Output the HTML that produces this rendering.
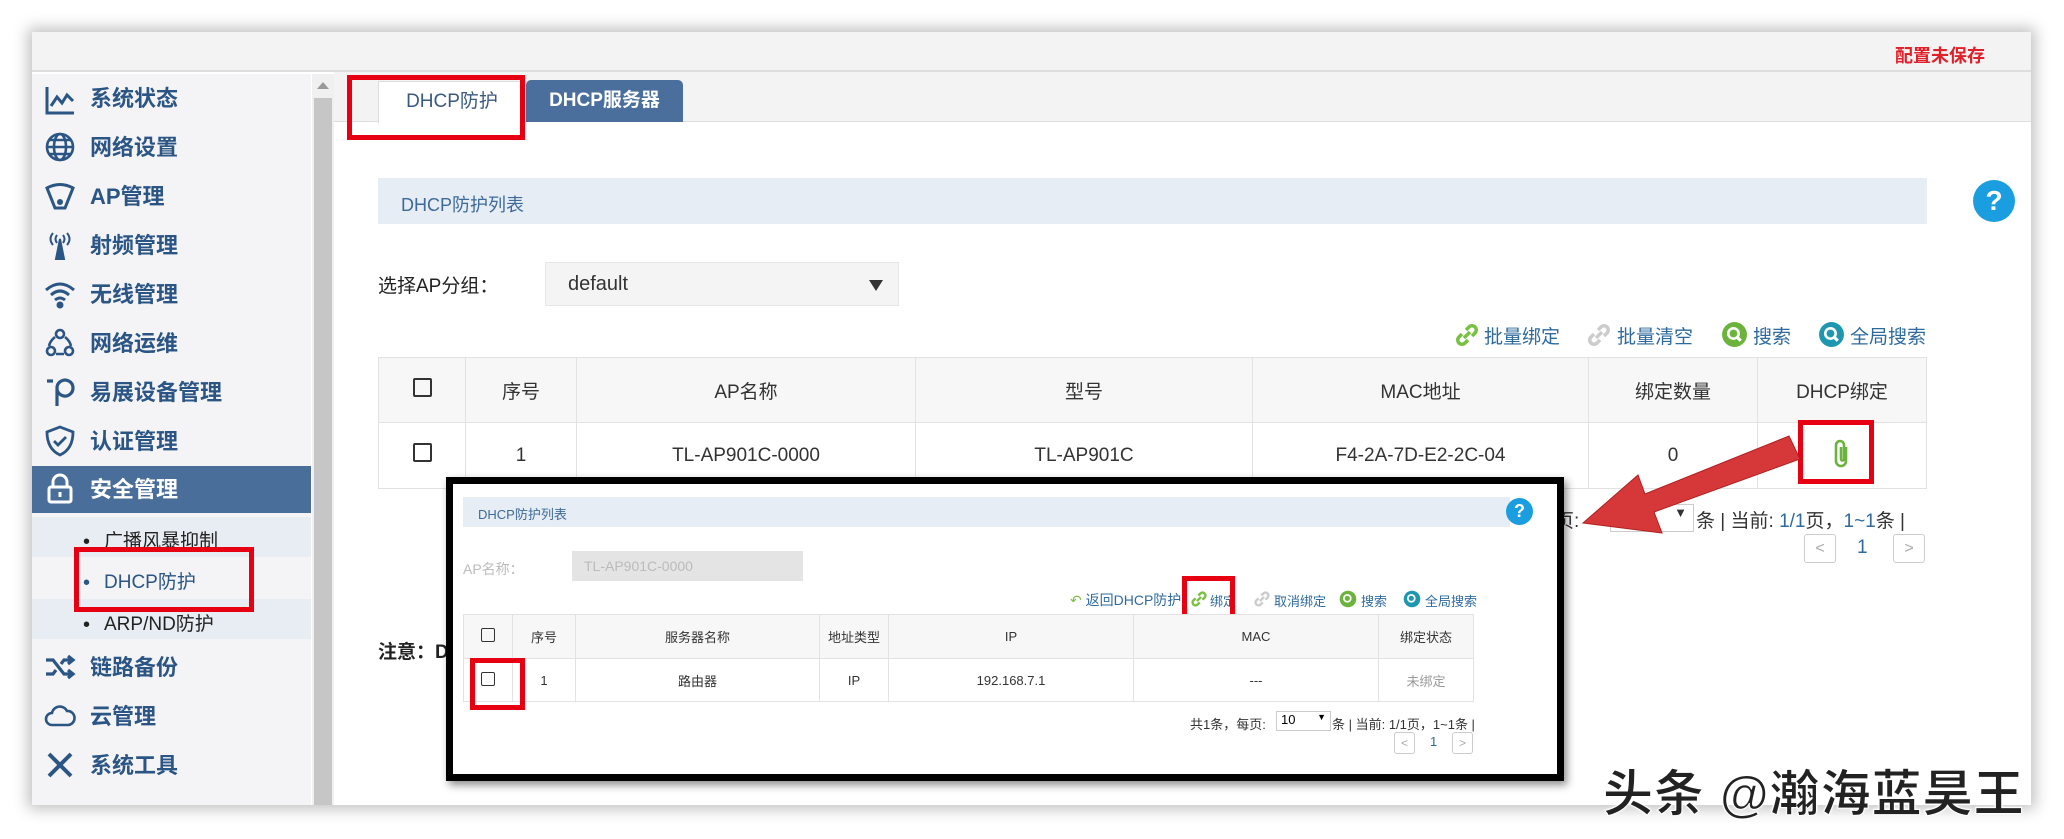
<!DOCTYPE html>
<html><head><meta charset="utf-8"><style>
*{margin:0;padding:0;box-sizing:border-box}
body{width:2064px;height:839px;background:#fff;position:relative;overflow:hidden;font-family:"Liberation Sans","Noto Sans CJK SC",sans-serif}
.a{position:absolute}
.panel{left:32px;top:32px;width:1999px;height:773px;background:#fff;box-shadow:0 0 14px 4px rgba(0,0,0,.25)}
.nav{font-size:22px;font-weight:bold;color:#2b5584;left:90px;line-height:26px}
.ic{left:44px;width:32px;height:32px}
.sub{font-size:19px;color:#222;left:104px}
.rb{border:5px solid #e60012}
table{border-collapse:collapse;position:absolute}
td{border:1px solid #e2e2e2;text-align:center;color:#333}
.cb{display:inline-block;width:19px;height:19px;border:2px solid #333;border-radius:2px}
.lnk{color:#2f6a9e;font-size:19px}
.pg{border:1px solid #ccc;border-radius:3px;background:#fff;color:#aaa;text-align:center}
</style></head><body>
<div class="a panel"></div>
<div class="a" style="left:32px;top:32px;width:1999px;height:40px;background:#f3f3f3;border-bottom:2px solid #ddd"></div>
<div class="a" style="left:1895px;top:42px;font-size:18px;color:#e0202a;font-weight:bold">配置未保存</div>
<div class="a" style="left:32px;top:74px;width:279px;height:731px;background:#f4f4f6"></div>
<div class="a" style="left:312px;top:74px;width:22px;height:731px;background:#f0f0f0"></div>
<div class="a" style="left:314px;top:98px;width:18px;height:707px;background:#c6c6c6"></div>
<div class="a" style="left:317px;top:82px;width:0;height:0;border-left:6px solid transparent;border-right:6px solid transparent;border-bottom:7px solid #999"></div>

<svg class="a ic" style="top:84px" viewBox="0 0 32 32" fill="none" stroke="#2b5584" stroke-width="3"><path d="M3 3V29H30M7 22l6-9 5 6 5-8 6 6"/></svg>
<div class="a nav" style="top:86px">系统状态</div>
<svg class="a ic" style="top:131px" viewBox="0 0 32 32" fill="none" stroke="#2b5584" stroke-width="2.6"><circle cx="16" cy="16" r="13"/><ellipse cx="16" cy="16" rx="6" ry="13"/><path d="M3 16H29M5 9H27M5 23H27"/></svg>
<div class="a nav" style="top:135px">网络设置</div>
<svg class="a ic" style="top:180px" viewBox="0 0 32 32" fill="none" stroke="#2b5584" stroke-width="3"><path d="M3 8Q16 1 29 8L21 28H11Z"/><circle cx="16" cy="22" r="1.5" fill="#2b5584"/></svg>
<div class="a nav" style="top:184px">AP管理</div>
<svg class="a ic" style="top:229px" viewBox="0 0 32 32" fill="none" stroke="#2b5584" stroke-width="2"><path d="M9 4Q4 10 9 16M13 6Q10 10 13 14M23 4Q28 10 23 16M19 6Q22 10 19 14"/><path d="M16 10L12 30H20Z" fill="#2b5584"/></svg>
<div class="a nav" style="top:233px">射频管理</div>
<svg class="a ic" style="top:278px" viewBox="0 0 32 32" fill="none" stroke="#2b5584" stroke-width="3"><path d="M2 12Q16 0 30 12M7 17Q16 9 25 17M11 22Q16 18 21 22"/><circle cx="16" cy="27" r="2" fill="#2b5584"/></svg>
<div class="a nav" style="top:282px">无线管理</div>
<svg class="a ic" style="top:327px" viewBox="0 0 32 32" fill="none" stroke="#2b5584" stroke-width="2.6"><circle cx="16" cy="7" r="4"/><circle cx="7" cy="24" r="4"/><circle cx="25" cy="24" r="4"/><path d="M11 10Q6 14 5 19M21 10Q26 14 27 19M12 27H20"/></svg>
<div class="a nav" style="top:331px">网络运维</div>
<svg class="a ic" style="top:376px" viewBox="0 0 32 32" fill="none" stroke="#2b5584" stroke-width="3.2"><path d="M3 5H9M13 30V12a8 8 0 1 1 0 .1"/></svg>
<div class="a nav" style="top:380px">易展设备管理</div>
<svg class="a ic" style="top:425px" viewBox="0 0 32 32" fill="none" stroke="#2b5584" stroke-width="2.8"><path d="M16 2L29 7Q29 24 16 30Q3 24 3 7Z"/><path d="M10 16l4 4 8-8"/></svg>
<div class="a nav" style="top:429px">认证管理</div>
<div class="a" style="left:32px;top:466px;width:279px;height:47px;background:#4a6e9a"></div>
<svg class="a ic" style="top:473px" viewBox="0 0 32 32" fill="none" stroke="#fff" stroke-width="3"><path d="M9 14V9a7 7 0 0 1 14 0v5"/><rect x="5" y="14" width="22" height="15" rx="2"/><path d="M16 19v5"/></svg>
<div class="a nav" style="top:477px;color:#fff">安全管理</div>
<div class="a" style="left:32px;top:517px;width:279px;height:40px;background:#e8edf3"></div>
<div class="a" style="left:32px;top:599px;width:279px;height:40px;background:#e8edf3"></div>
<div class="a" style="left:83px;top:531px;font-size:20px;color:#222">•</div>
<div class="a sub" style="top:526px">广播风暴抑制</div>
<div class="a" style="left:83px;top:572px;font-size:20px;color:#2b5584">•</div>
<div class="a sub" style="top:567px;color:#2b5584">DHCP防护</div>
<div class="a" style="left:83px;top:614px;font-size:20px;color:#222">•</div>
<div class="a sub" style="top:609px">ARP/ND防护</div>
<div class="a rb" style="left:74px;top:547px;width:180px;height:65px"></div>
<svg class="a ic" style="top:651px" viewBox="0 0 32 32" fill="none" stroke="#2b5584" stroke-width="3.2"><path d="M2 9H9L20 23H28M2 23H9L12 19M17 13L20 9H28M24 5l5 4-5 4M24 19l5 4-5 4"/></svg>
<div class="a nav" style="top:655px">链路备份</div>
<svg class="a ic" style="top:700px" viewBox="0 0 32 32" fill="none" stroke="#2b5584" stroke-width="2.6"><path d="M8 25a6 6 0 0 1 0-12a8 8 0 0 1 15-2a7 7 0 0 1 1 14Z"/></svg>
<div class="a nav" style="top:704px">云管理</div>
<svg class="a ic" style="top:749px" viewBox="0 0 32 32" fill="none" stroke="#2b5584" stroke-width="4"><path d="M5 27L27 5M5 5l22 22"/></svg>
<div class="a nav" style="top:753px">系统工具</div>

<div class="a" style="left:334px;top:72px;width:1697px;height:50px;background:#f3f3f3;border-bottom:1px solid #ddd"></div>
<div class="a" style="left:378px;top:81px;width:148px;height:42px;background:#fff;border:1px solid #ddd;border-bottom:none;color:#3a5a80;font-size:19px;text-align:center;line-height:40px">DHCP防护</div>
<div class="a" style="left:526px;top:80px;width:157px;height:42px;background:#4a6f9c;border-radius:5px 5px 0 0;color:#fff;font-size:19px;font-weight:bold;text-align:center;line-height:42px">DHCP服务器</div>
<div class="a rb" style="left:347px;top:75px;width:178px;height:65px"></div>

<div class="a" style="left:378px;top:178px;width:1549px;height:46px;background:#e6edf4"></div>
<div class="a" style="left:401px;top:191px;font-size:18px;color:#3d6a9a">DHCP防护列表</div>
<div class="a" style="left:1973px;top:180px;width:42px;height:42px;border-radius:50%;background:#1a9ee0;color:#fff;font-size:28px;font-weight:bold;text-align:center;line-height:42px">?</div>

<div class="a" style="left:378px;top:271px;font-size:19px;color:#222">选择AP分组：</div>
<div class="a" style="left:545px;top:262px;width:354px;height:44px;background:#f4f4f4;border:1px solid #e6e6e6;font-size:20px;color:#333;padding-left:22px;line-height:42px">default</div>
<div class="a" style="left:869px;top:280px;border-left:7px solid transparent;border-right:7px solid transparent;border-top:11px solid #333"></div>

<svg class="a" style="left:1454px;top:322px" width="26" height="26" viewBox="0 0 26 26" fill="none" stroke="#7ac043" stroke-width="3.5"><path d="M12 8l3-3a4 4 0 0 1 6 6l-3 3M14 18l-3 3a4 4 0 0 1-6-6l3-3M10 16l6-6"/></svg>
<div class="a lnk" style="left:1484px;top:322px">批量绑定</div>
<svg class="a" style="left:1586px;top:322px" width="26" height="26" viewBox="0 0 26 26" fill="none" stroke="#ccc" stroke-width="3.5"><path d="M12 8l3-3a4 4 0 0 1 6 6l-3 3M14 18l-3 3a4 4 0 0 1-6-6l3-3M10 16l6-6"/></svg>
<div class="a lnk" style="left:1617px;top:322px">批量清空</div>
<svg class="a" style="left:1721px;top:321px" width="27" height="27" viewBox="0 0 26 26"><circle cx="13" cy="13" r="12" fill="#6cb33e"/><circle cx="12" cy="12" r="5" fill="none" stroke="#fff" stroke-width="2.5"/><path d="M15 15l4 4" stroke="#fff" stroke-width="3"/></svg>
<div class="a lnk" style="left:1753px;top:322px">搜索</div>
<svg class="a" style="left:1818px;top:321px" width="27" height="27" viewBox="0 0 26 26"><circle cx="13" cy="13" r="12" fill="#1f97b0"/><circle cx="12" cy="12" r="5" fill="none" stroke="#fff" stroke-width="2.5"/><path d="M15 15l4 4" stroke="#fff" stroke-width="3"/></svg>
<div class="a lnk" style="left:1850px;top:322px">全局搜索</div>

<table style="left:378px;top:357px;width:1549px;font-size:19px">
<tr style="height:65px;background:#f7f7f7"><td style="width:87px"><span class="cb"></span></td><td style="width:111px">序号</td><td style="width:339px">AP名称</td><td style="width:337px">型号</td><td style="width:336px">MAC地址</td><td style="width:169px">绑定数量</td><td>DHCP绑定</td></tr>
<tr style="height:66px"><td><span class="cb"></span></td><td>1</td><td>TL-AP901C-0000</td><td>TL-AP901C</td><td>F4-2A-7D-E2-2C-04</td><td>0</td><td><svg width="20" height="32" viewBox="0 0 20 32" fill="none" stroke="#6cb33e" stroke-width="2.6"><path d="M14 10V24a5 5 0 0 1-10 0V8a4 4 0 0 1 8 0V22a1.5 1.5 0 0 1-3 0V10"/></svg></td></tr>
</table>
<div class="a rb" style="left:1798px;top:420px;width:76px;height:64px"></div>

<div class="a" style="left:1555px;top:506px;font-size:19px;color:#333">页:</div>
<div class="a" style="left:1610px;top:504px;width:84px;height:28px;border:1px solid #ccc;font-size:19px;color:#333;padding-left:6px">10<span style="position:absolute;right:6px;top:0;font-size:13px">▼</span></div>
<div class="a" style="left:1696px;top:506px;font-size:19px;color:#333">条 | 当前: <span style="color:#2f6a9e">1/1</span>页，<span style="color:#2f6a9e">1~1</span>条 |</div>
<div class="a pg" style="left:1804px;top:534px;width:32px;height:29px;line-height:27px">&lt;</div>
<div class="a" style="left:1857px;top:537px;font-size:19px;color:#2f6a9e">1</div>
<div class="a pg" style="left:1893px;top:534px;width:32px;height:29px;line-height:27px">&gt;</div>
<div class="a" style="left:378px;top:637px;font-size:19px;font-weight:bold;color:#222">注意：D</div>

<svg class="a" style="left:0;top:0" width="2064" height="839"><polygon points="1583,523 1638,475 1645,494 1789,436 1800,459 1654,512 1662,533" fill="#d6383a" stroke="#b02020" stroke-width="1"/></svg>

<div class="a" style="left:446px;top:477px;width:1118px;height:304px;background:#fff;border:7px solid #000;box-shadow:3px 4px 8px rgba(0,0,0,.45)"></div>
<div class="a" style="left:463px;top:497px;width:1047px;height:30px;background:#e6edf4"></div>
<div class="a" style="left:478px;top:504px;font-size:13px;color:#3d6a9a">DHCP防护列表</div>
<div class="a" style="left:1506px;top:498px;width:27px;height:27px;border-radius:50%;background:#1a9ee0;color:#fff;font-size:18px;font-weight:bold;text-align:center;line-height:27px">?</div>
<div class="a" style="left:463px;top:559px;font-size:14px;color:#bbb">AP名称：</div>
<div class="a" style="left:572px;top:551px;width:231px;height:30px;background:#e4e4e4;font-size:14px;color:#bbb;padding-left:12px;line-height:30px">TL-AP901C-0000</div>

<div class="a" style="left:1070px;top:590px;font-size:14px;color:#2f6a9e"><span style="color:#7ac043">↶</span> 返回DHCP防护</div>
<svg class="a" style="left:1190px;top:590px" width="18" height="18" viewBox="0 0 26 26" fill="none" stroke="#7ac043" stroke-width="3.5"><path d="M12 8l3-3a4 4 0 0 1 6 6l-3 3M14 18l-3 3a4 4 0 0 1-6-6l3-3M10 16l6-6"/></svg>
<div class="a" style="left:1210px;top:591px;font-size:13px;color:#2f6a9e">绑定</div>
<svg class="a" style="left:1253px;top:590px" width="18" height="18" viewBox="0 0 26 26" fill="none" stroke="#ccc" stroke-width="3.5"><path d="M12 8l3-3a4 4 0 0 1 6 6l-3 3M14 18l-3 3a4 4 0 0 1-6-6l3-3M10 16l6-6"/></svg>
<div class="a" style="left:1274px;top:591px;font-size:13px;color:#2f6a9e">取消绑定</div>
<svg class="a" style="left:1339px;top:590px" width="18" height="18" viewBox="0 0 26 26"><circle cx="13" cy="13" r="12" fill="#6cb33e"/><circle cx="12" cy="12" r="5" fill="none" stroke="#fff" stroke-width="2.5"/></svg>
<div class="a" style="left:1361px;top:591px;font-size:13px;color:#2f6a9e">搜索</div>
<svg class="a" style="left:1403px;top:590px" width="18" height="18" viewBox="0 0 26 26"><circle cx="13" cy="13" r="12" fill="#1f97b0"/><circle cx="12" cy="12" r="5" fill="none" stroke="#fff" stroke-width="2.5"/></svg>
<div class="a" style="left:1425px;top:591px;font-size:13px;color:#2f6a9e">全局搜索</div>
<div class="a rb" style="left:1182px;top:576px;width:53px;height:53px"></div>

<table style="left:463px;top:614px;width:1011px;font-size:13px">
<tr style="height:44px;background:#f7f7f7"><td style="width:49px"><span class="cb" style="width:14px;height:14px;border-width:1.5px"></span></td><td style="width:63px">序号</td><td style="width:244px">服务器名称</td><td style="width:69px">地址类型</td><td style="width:245px">IP</td><td style="width:245px">MAC</td><td>绑定状态</td></tr>
<tr style="height:43px"><td><span class="cb" style="width:14px;height:14px;border-width:1.5px"></span></td><td>1</td><td>路由器</td><td>IP</td><td>192.168.7.1</td><td>---</td><td style="color:#999">未绑定</td></tr>
</table>
<div class="a rb" style="left:470px;top:658px;width:55px;height:52px"></div>
<div class="a" style="left:1190px;top:714px;font-size:13px;color:#333">共1条，每页:</div>
<div class="a" style="left:1276px;top:711px;width:55px;height:20px;border:1px solid #ccc;font-size:13px;padding-left:4px">10<span style="position:absolute;right:4px;top:0;font-size:9px">▼</span></div>
<div class="a" style="left:1332px;top:714px;font-size:13px;color:#333">条 | 当前: 1/1页，1~1条 |</div>
<div class="a pg" style="left:1394px;top:732px;width:21px;height:22px;font-size:12px;line-height:20px">&lt;</div>
<div class="a" style="left:1430px;top:734px;font-size:13px;color:#2f6a9e">1</div>
<div class="a pg" style="left:1452px;top:732px;width:21px;height:22px;font-size:12px;line-height:20px">&gt;</div>

<div class="a" style="left:1603px;top:754px;font-size:50px;font-weight:bold;color:#222;-webkit-text-stroke:1px #fff;text-shadow:0 0 3px #fff;letter-spacing:1px">头条 @瀚海蓝昊王</div>
</body></html>
